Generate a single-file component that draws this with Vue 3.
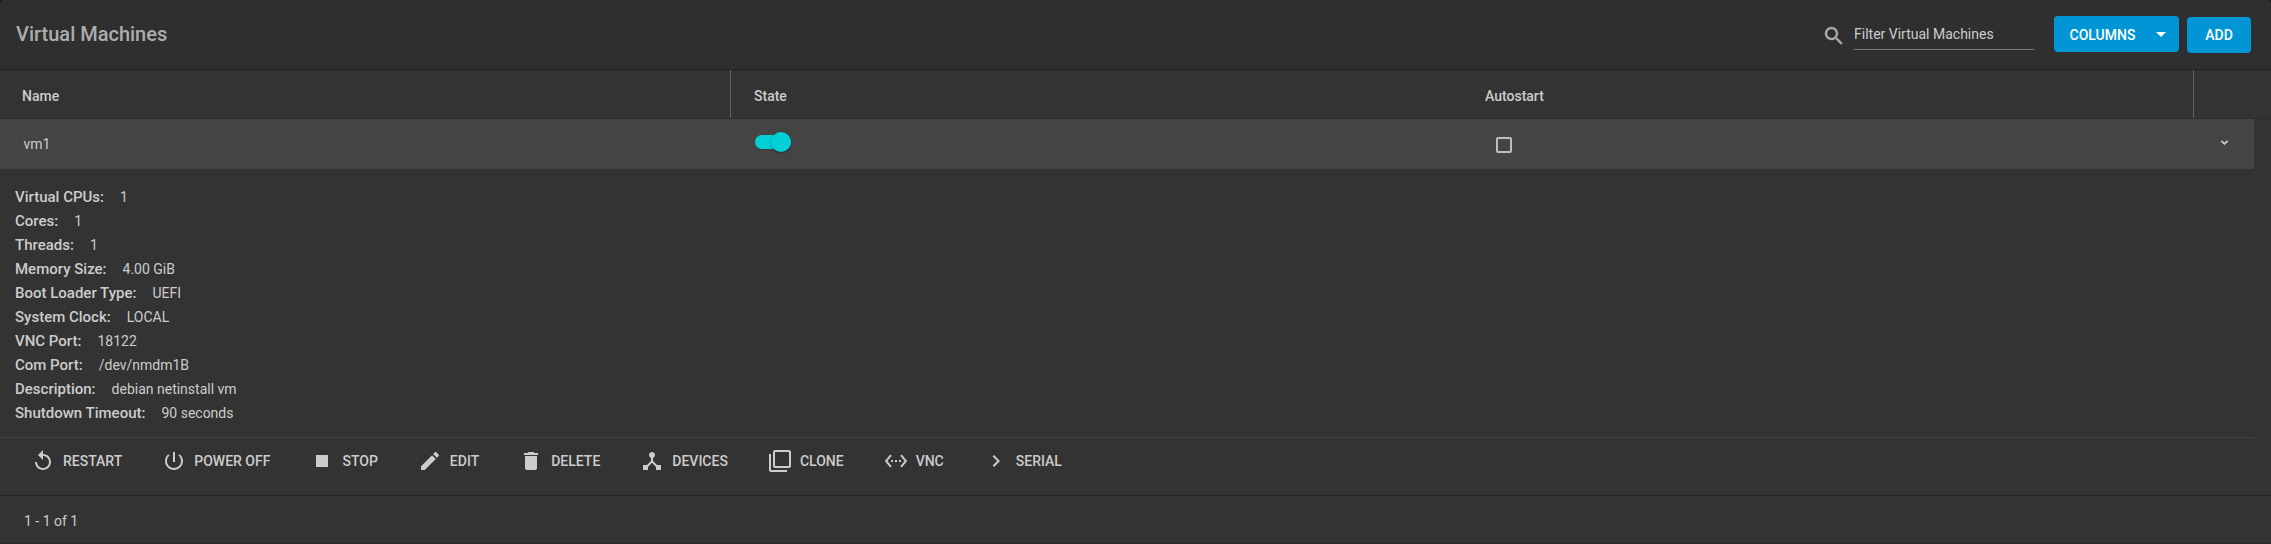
<script setup>
const details = [
  ['Virtual CPUs', '1'],
  ['Cores', '1'],
  ['Threads', '1'],
  ['Memory Size', '4.00 GiB'],
  ['Boot Loader Type', 'UEFI'],
  ['System Clock', 'LOCAL'],
  ['VNC Port', '18122'],
  ['Com Port', '/dev/nmdm1B'],
  ['Description', 'debian netinstall vm'],
  ['Shutdown Timeout', '90 seconds'],
]

const actions = [
  { label: 'Restart', icon: 'M12 5V1L7 6l5 5V7c3.31 0 6 2.69 6 6s-2.69 6-6 6-6-2.69-6-6H4c0 4.42 3.58 8 8 8s8-3.58 8-8-3.58-8-8-8z' },
  { label: 'Power off', icon: 'M13 3h-2v10h2V3zm4.83 2.17l-1.42 1.42C17.99 7.86 19 9.81 19 12c0 3.87-3.13 7-7 7s-7-3.13-7-7c0-2.19 1.01-4.14 2.58-5.42L6.17 5.17C4.23 6.82 3 9.26 3 12c0 4.97 4.03 9 9 9s9-4.03 9-9c0-2.74-1.23-5.18-3.17-6.83z' },
  { label: 'Stop', icon: 'M6 6h12v12H6z' },
  { label: 'Edit', icon: 'M3 17.25V21h3.75L17.81 9.94l-3.75-3.75L3 17.25zM20.71 7.04c.39-.39.39-1.02 0-1.41l-2.34-2.34c-.39-.39-1.02-.39-1.41 0l-1.83 1.83 3.75 3.75 1.83-1.83z' },
  { label: 'Delete', icon: 'M6 19c0 1.1.9 2 2 2h8c1.1 0 2-.9 2-2V7H6v12zM19 4h-3.5l-1-1h-5l-1 1H5v2h14V4z' },
  { label: 'Devices', icon: 'M17 16l-4-4V8.82C14.16 8.4 15 7.3 15 6c0-1.66-1.34-3-3-3S9 4.34 9 6c0 1.3.84 2.4 2 2.82V12l-4 4H3v5h5v-3.05l4-4.2 4 4.2V21h5v-5h-4z' },
  { label: 'Clone', icon: 'M3 5H1v16c0 1.1.9 2 2 2h16v-2H3V5zm18-4H7c-1.1 0-2 .9-2 2v14c0 1.1.9 2 2 2h14c1.1 0 2-.9 2-2V3c0-1.1-.9-2-2-2zm0 16H7V3h14v14z' },
  { label: 'VNC', icon: 'M7.77 6.76L6.23 5.48.82 12l5.41 6.52 1.54-1.28L3.42 12l4.35-5.24zM7 13h2v-2H7v2zm10-2h-2v2h2v-2zm-6 2h2v-2h-2v2zm6.77-7.52l-1.54 1.28L20.58 12l-4.35 5.24 1.54 1.28L23.18 12l-5.41-6.52z' },
  { label: 'Serial', icon: 'M10 6L8.59 7.41 13.17 12l-4.58 4.59L10 18l6-6z' },
]
</script>

<template>
  <main class="card">
    <header class="toolbar">
      <h1>Virtual Machines</h1>
      <div class="tools">
        <svg class="icon search" viewBox="0 0 24 24"><path d="M15.5 14h-.79l-.28-.27C15.41 12.59 16 11.11 16 9.5 16 5.91 13.09 3 9.5 3S3 5.91 3 9.5 5.91 16 9.5 16c1.61 0 3.09-.59 4.23-1.57l.27.28v.79l5 4.99L20.49 19l-4.99-5zm-6 0C7.01 14 5 11.99 5 9.5S7.01 5 9.5 5 14 7.01 14 9.5 11.99 14 9.5 14z" /></svg>
        <div class="filter">Filter Virtual Machines</div>
        <button class="btn columns">
          <span>COLUMNS</span>
          <svg class="caret" viewBox="0 0 10 5"><path d="M0 0h10L5 5z" /></svg>
        </button>
        <button class="btn add">ADD</button>
      </div>
    </header>

    <div class="grid head">
      <div class="cell divided title">Name</div>
      <div class="cell">State</div>
      <div class="cell divided">Autostart</div>
      <div></div>
    </div>

    <div class="grid row">
      <div class="cell name">vm1</div>
      <div class="cell"><span class="toggle"><span class="thumb"></span></span></div>
      <div class="cell"><span class="checkbox"></span></div>
      <div class="cell expand"><svg viewBox="0 0 8 5"><path d="M.8.8L4 3.8 7.2.8" /></svg></div>
    </div>

    <section class="panel">
      <dl>
        <div v-for="[label, value] in details" :key="label" class="detail">
          <dt>{{ label }}:</dt>
          <dd>{{ value }}</dd>
        </div>
      </dl>
      <div class="actions">
        <button v-for="a in actions" :key="a.label" class="action">
          <svg class="icon" viewBox="0 0 24 24"><path :d="a.icon" /></svg>
          <span>{{ a.label.toUpperCase() }}</span>
        </button>
      </div>
    </section>

    <footer>1 - 1 of 1</footer>
  </main>
</template>

<style>
body { background: #1e1e1e; }
</style>

<style scoped>
* { box-sizing: border-box; }
.card {
  width: 2271px;
  height: 544px;
  overflow: hidden;
  border-radius: 5px 5px 0 0;
  border-bottom: 1px solid #2a2a2a;
  background: #333;
  color: #ccc;
  font: 400 14px/20px Roboto, sans-serif;
}
button { border: 0; background: none; padding: 0; color: inherit; font: inherit; }
.icon { width: 24px; height: 24px; fill: currentColor; flex: none; display: block; }
.toolbar {
  display: flex;
  justify-content: space-between;
  height: 70px;
  padding: 0 20px 0 16px;
  background: #2f2f2f;
  border-bottom: 1px solid #222;
}
h1 { margin: 18px 0 0; font-size: 20px; line-height: 32px; font-weight: 500; color: #adadad; }
.tools { display: flex; align-items: flex-start; }
.search { margin: 24px 8px 0 0; color: #adadad; stroke: currentColor; stroke-width: .3; }
.filter { width: 180px; height: 32px; margin: 18px 20px 0 0; padding-top: 6px; border-bottom: 1px solid #777; }
.btn { height: 36px; border-radius: 4px; background: #0095d5; color: #fff; font-weight: 500; display: flex; align-items: center; }
.columns { width: 125px; margin: 16px 8px 0 0; padding: 1px 13px 0 15.5px; justify-content: space-between; }
.caret { width: 10px; height: 5px; fill: #fff; }
.add { width: 64px; margin-top: 17px; justify-content: center; }
.grid { display: grid; grid-template-columns: 731px 731px 732px 1fr; }
.cell { padding-left: 23px; }
.head { height: 49px; grid-template-rows: 48px; border-bottom: 1px solid #2a2a2a; line-height: 52px; font-weight: 500; }
.head .title { padding-left: 22px; }
.divided { border-right: 1px solid #606060; }
.row { width: 2254px; height: 50px; background: #444; line-height: 50px; }
.name { padding-left: 23.5px; }
.toggle { display: block; width: 36px; height: 14px; margin: 16px 0 0 1px; border-radius: 7px; background: #00d0d6; }
.thumb {
  display: block;
  width: 20px;
  height: 20px;
  margin-left: 16px;
  border-radius: 50%;
  background: #00d0d6;
  transform: translateY(-3px);
  box-shadow: 0 1px 3px rgba(0, 0, 0, .35);
}
.checkbox { display: block; width: 16px; height: 16px; margin: 18px 0 0 11px; border: 2px solid #bebebe; border-radius: 2px; }
.expand { padding: 21px 0 0 26px; line-height: 0; }
.expand svg { width: 9px; height: 5px; fill: none; stroke: #ccc; stroke-width: 1.8; }
.panel { width: 2254px; height: 326px; padding-top: 16px; }
dl { margin: 0; padding-left: 15px; height: 252px; }
.detail { display: flex; gap: 16px; line-height: 24px; }
dt { font-weight: 500; font-size: 15px; }
dd { margin: 0; }
.actions { display: flex; gap: 40px; height: 58px; padding: 11px 0 0 31px; border-top: 1px solid #444; }
.action { display: flex; align-items: center; gap: 8px; height: 24px; font-weight: 500; }
footer { width: 2271px; height: 48px; border-top: 1px solid #222; padding-left: 24px; line-height: 50px; }
</style>
